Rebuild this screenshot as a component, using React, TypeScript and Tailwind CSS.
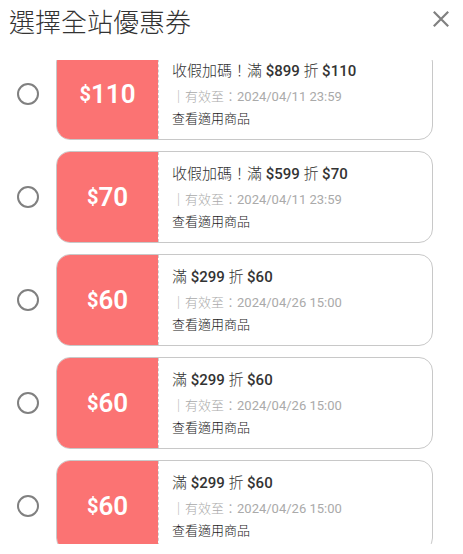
interface Coupon {
  id: number;
  title?: string;
  threshold: number;
  amount: number;
  expiry: string;
}

const COUPONS: Coupon[] = [
  { id: 1, title: "收假加碼！", threshold: 899, amount: 110, expiry: "2024/04/11 23:59" },
  { id: 2, title: "收假加碼！", threshold: 599, amount: 70, expiry: "2024/04/11 23:59" },
  { id: 3, threshold: 299, amount: 60, expiry: "2024/04/26 15:00" },
  { id: 4, threshold: 299, amount: 60, expiry: "2024/04/26 15:00" },
  { id: 5, threshold: 299, amount: 60, expiry: "2024/04/26 15:00" },
];

function CouponRow({ coupon }: { coupon: Coupon }) {
  const inputId = `coupon-${coupon.id}`;

  return (
    <li className="flex items-center gap-[17px]">
      <input
        id={inputId}
        type="radio"
        name="coupon"
        className="size-[22px] shrink-0 appearance-none rounded-full border-2 border-[#808080] bg-clip-padding checked:bg-[#fb7373]"
      />
      <div className="flex h-[92px] min-w-0 flex-1 overflow-hidden rounded-[14px] border border-[#c8c8c8]">
        <div className="flex w-[102px] shrink-0 items-center justify-center border-r border-dashed border-[#d0d0d0] bg-[#fb7373] bg-clip-padding text-white">
          <span className="text-[20px] leading-8 font-bold">$</span>
          <span className="text-[26px] leading-8 font-semibold">{coupon.amount}</span>
        </div>
        <div className="flex min-w-0 flex-col items-start pt-2 pl-[13px]">
          <label htmlFor={inputId} className="text-[15px] leading-7 text-[#333333]">
            {coupon.title}滿 <span className="font-medium">${coupon.threshold}</span> 折{" "}
            <span className="font-medium">${coupon.amount}</span>
          </label>
          <p className="text-[13px] leading-6 text-[#aaaaaa]">
            ｜有效至：<span className="font-normal">{coupon.expiry}</span>
          </p>
          <a href="#" className="text-[13px] leading-5 text-[#222222]">
            查看適用商品
          </a>
        </div>
      </div>
    </li>
  );
}

export default function App() {
  return (
    <div className="flex h-screen flex-col bg-white pb-[10px] font-['Roboto','Noto_Sans_CJK_TC',sans-serif] font-light">
      <header className="flex h-[60px] shrink-0 items-start justify-between pt-[5px] pr-3 pl-[9px]">
        <h1 className="text-[26px] leading-9 text-[#333333]">選擇全站優惠券</h1>
        <button type="button" aria-label="關閉" className="mt-1 flex size-5 items-center justify-center text-[#808080]">
          <svg viewBox="0 0 20 20" className="size-5" fill="none" stroke="currentColor" strokeWidth="2.2">
            <path d="M2.8 2.8 17.2 17.2M17.2 2.8 2.8 17.2" />
          </svg>
        </button>
      </header>
      <main className="min-h-0 flex-1 overflow-hidden">
        <ul className="-mt-3 flex flex-col gap-[11px] pr-[30px] pl-[17px]">
          {COUPONS.map((coupon) => (
            <CouponRow key={coupon.id} coupon={coupon} />
          ))}
        </ul>
      </main>
    </div>
  );
}
